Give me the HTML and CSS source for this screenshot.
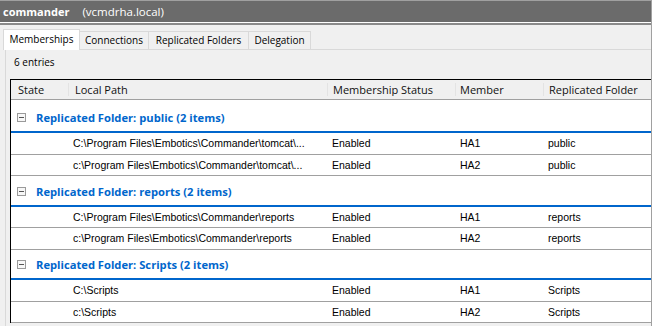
FILE: index.html
```html
<!DOCTYPE html>
<html>
<head>
<meta charset="utf-8">
<link rel="stylesheet" href="styles.css">
</head>
<body>
<div class="window">
  <div class="title-wrap">
    <div class="titlebar"><span class="name">commander</span><span class="host">(vcmdrha.local)</span></div>
  </div>
  <div class="tabs">
    <div class="tab active t1">Memberships</div>
    <div class="tab t2">Connections</div>
    <div class="tab t3">Replicated Folders</div>
    <div class="tab t4">Delegation</div>
  </div>
  <div class="panel">
    <div class="count">6 entries</div>
    <div class="list">
      <div class="row head">
        <div class="hc c1">State</div>
        <div class="hc c2">Local Path</div>
        <div class="hc c3">Membership Status</div>
        <div class="hc c4">Member</div>
        <div class="hc c5">Replicated Folder</div>
      </div>

      <div class="group first"><span class="exp"></span><span class="gtitle">Replicated Folder: public (2 items)</span></div>
      <div class="row item"><div></div><div class="path">C:\Program Files\Embotics\Commander\tomcat\...</div><div>Enabled</div><div>HA1</div><div>public</div></div>
      <div class="row item"><div></div><div class="path">c:\Program Files\Embotics\Commander\tomcat\...</div><div>Enabled</div><div>HA2</div><div>public</div></div>

      <div class="group"><span class="exp"></span><span class="gtitle">Replicated Folder: reports (2 items)</span></div>
      <div class="row item"><div></div><div class="path">C:\Program Files\Embotics\Commander\reports</div><div>Enabled</div><div>HA1</div><div>reports</div></div>
      <div class="row item"><div></div><div class="path">c:\Program Files\Embotics\Commander\reports</div><div>Enabled</div><div>HA2</div><div>reports</div></div>

      <div class="group"><span class="exp"></span><span class="gtitle">Replicated Folder: Scripts (2 items)</span></div>
      <div class="row item"><div></div><div class="path">C:\Scripts</div><div>Enabled</div><div>HA1</div><div>Scripts</div></div>
      <div class="row item"><div></div><div class="path">c:\Scripts</div><div>Enabled</div><div>HA2</div><div>Scripts</div></div>
    </div>
  </div>
</div>
</body>
</html>
```

FILE: styles.css
```css
* { box-sizing: border-box; margin: 0; padding: 0; }
html, body { width: 652px; height: 326px; overflow: hidden; }
body {
  background: #f0f0f0;
  font-family: "Open Sans", "Noto Sans", sans-serif;
  color: #000;
}
.window {
  width: 652px;
  height: 326px;
  border-right: 1px solid #a0a0a0;
  display: flex;
  flex-direction: column;
  background: #f0f0f0;
  overflow: hidden;
}
.title-wrap {
  border-top: 1px solid #a0a0a0;
  border-bottom: 2px solid #8a8a8a;
}
.titlebar {
  height: 22px;
  background: #6b6b6b;
  border-bottom: 1px solid #ffffff;
  display: flex;
  align-items: center;
  padding-left: 3px;
  color: #fff;
  font-size: 11.5px;
  white-space: nowrap;
}
.titlebar .name { font-weight: bold; font-size: 11px; }
.titlebar .host { margin-left: 13px; }

.tabs {
  height: 24px;
  display: flex;
  align-items: flex-end;
  padding-left: 3px;
  font-size: 10px;
  white-space: nowrap;
}
.tab {
  height: 18px;
  border: 1px solid #d9d9d9;
  border-bottom: none;
  background: #f0f0f0;
  text-align: center;
  line-height: 17px;
  margin-left: -1px;
}
.tab.active {
  position: relative;
  z-index: 1;
  height: 21px;
  margin-bottom: -1px;
  margin-left: 0;
  background: #ffffff;
  line-height: 19px;
}
.t1 { width: 77px; }
.t2 { width: 70px; }
.t3 { width: 101px; }
.t4 { width: 63px; }

.panel {
  flex: 1;
  margin-left: 5px;
  border-top: 1px solid #d9d9d9;
  border-left: 1px solid #d9d9d9;
  display: flex;
  flex-direction: column;
  min-height: 0;
}
.count {
  height: 29px;
  padding: 5px 0 0 8px;
  line-height: 14px;
  font-size: 10px;
}
.list {
  flex: 1;
  margin-left: 4px;
  margin-bottom: 3px;
  border-top: 1px solid #000;
  border-left: 1px solid #000;
  background: #fff;
  overflow: hidden;
  min-height: 0;
}
.row {
  display: grid;
  grid-template-columns: 58px 259px 128px 88px 1fr;
  white-space: nowrap;
}
.head {
  height: 20px;
  background: #f0f0f0;
  border-bottom: 1px solid #a0a0a0;
  align-items: center;
  font-size: 11px;
  color: #111;
}
.hc {
  height: 13px;
  line-height: 13px;
  border-right: 1px solid #e3e3e3;
  padding-left: 5px;
  overflow: hidden;
}
.hc.c1 { padding-left: 7px; }
.hc.c2 { padding-left: 6px; }
.hc.c4 { padding-left: 4px; }
.hc.c5 { border-right: none; }

.group {
  height: 30.5px;
  border-bottom: 2px solid #0066cc;
  display: flex;
  align-items: center;
  padding-left: 6px;
  padding-top: 2px;
  color: #0066cc;
  font-weight: bold;
  font-size: 11.2px;
  white-space: nowrap;
}
.group.first { margin-top: 2.5px; }
.exp {
  width: 9px;
  height: 9px;
  border: 1px solid #9a9a9a;
  background: #f7f7f7;
  display: flex;
  align-items: center;
  justify-content: center;
}
.exp::before {
  content: "";
  width: 5px;
  height: 1px;
  background: #555;
}
.gtitle { margin-left: 10px; }

.item {
  height: 21.5px;
  border-bottom: 1px solid #a0a0a0;
  align-items: center;
  font-family: "Liberation Sans", Arial, sans-serif;
  font-size: 10.5px;
}
.item > div { padding-left: 4px; overflow: hidden; }
```
